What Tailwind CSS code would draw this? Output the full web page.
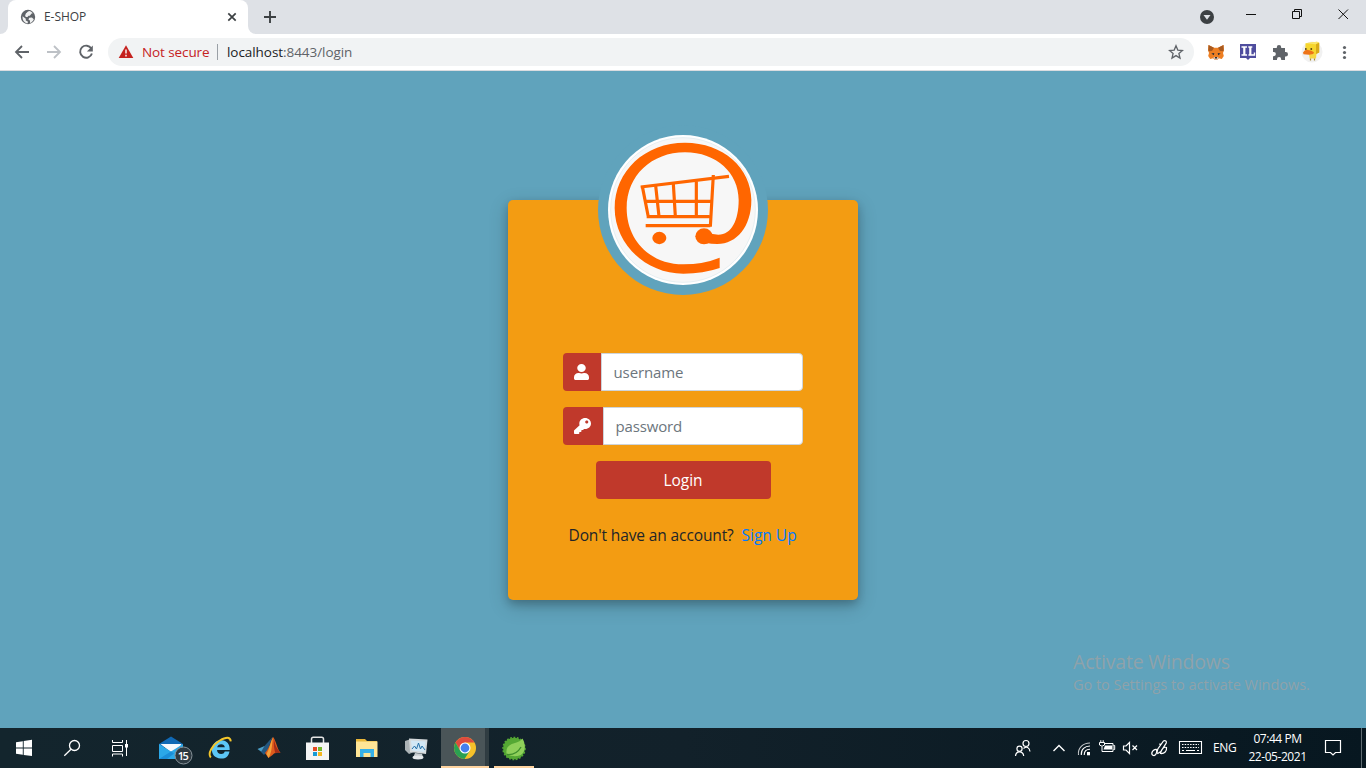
<!DOCTYPE html>
<html lang="en">
<head>
<meta charset="utf-8">
<title>E-SHOP</title>
<script src="https://cdn.jsdelivr.net/npm/@tailwindcss/browser@4"></script>
</head>
<body class="w-[1366px] h-[768px] overflow-hidden flex flex-col bg-[#60a3bc] font-['Open_Sans','Noto_Sans',sans-serif]">

<!-- Tab strip -->
<header class="h-[34px] flex shrink-0 bg-[#dee1e6]">
  <div class="w-2 h-full bg-white shrink-0"><div class="h-full bg-[#dee1e6] rounded-br-lg"></div></div>
  <div class="w-[240px] h-full bg-white rounded-t-lg flex items-center shrink-0">
    <svg class="ml-3 w-4 h-4" viewBox="20 9 16 16"><circle cx="28" cy="17" r="7.2" fill="#5f6368"/><path d="M22.600 16.200l3.200 2.600v1.800l2 1v1.700c-3.200-.2-5.700-3.200-5.200-7.100zM26 13.200c1.300-.3 1.500-2 3.200-2.200 1.400.3 2.700 1 3.600 2.200l-1.200.4-1.800 2.200h-1.300l-1 1.300h-1.700l-.7-1.600zM29.300 17.800l2.600-.3 1.900 1.700c-.6 1.900-2 3.200-3.700 3.700l-.2-2.400-1.500-1z" fill="#fff" opacity=".9"/></svg>
    <span class="ml-2 text-[12px] tracking-[-0.05px] text-[#3c4043] leading-4">E-SHOP</span>
    <svg class="ml-auto mr-[11px] w-[10px] h-[10px]" viewBox="0 0 10 10"><path d="M1.300 1.300l7.400 7.400M8.700 1.300L1.300 8.700" stroke="#3c4043" stroke-width="1.700"/></svg>
  </div>
  <div class="w-2 h-full bg-white shrink-0"><div class="h-full bg-[#dee1e6] rounded-bl-lg"></div></div>
  <svg class="w-[28px] h-[34px]" viewBox="256 0 28 34"><path d="M270 11v12M264 17h12" stroke="#3c4043" stroke-width="1.900"/></svg>
  <svg class="ml-auto w-[176px] h-[34px]" viewBox="1190 0 176 34"><circle cx="1207" cy="17" r="7" fill="#3c4043"/><path d="M1203.500 15h7l-3.500 4.800z" fill="#dee1e6"/><path d="M1246 14.500h10M1292.500 11.500h7v7h-7zM1294.500 11.500v-2h7v7h-2M1338.500 9.500l9.500 9.500M1348 9.500l-9.500 9.500" stroke="#111" fill="none"/></svg>
</header>

<!-- Toolbar -->
<nav class="h-[37px] shrink-0 flex items-center bg-white border-b border-[#dadce0]">
  <svg class="w-[108px] h-[36px] shrink-0" viewBox="0 34 108 36" fill="none" stroke-width="1.800"><path d="M29 52H16M22 46l-6 6 6 6" stroke="#5f6368"/><path d="M47 52h13M54 46l6 6-6 6" stroke="#bdc1c6"/><path d="M91.300 48.600a6 6 0 1 0 .6 4.800" stroke="#5f6368" stroke-width="1.900"/><path d="M92.800 45.600v5.900h-5.900z" fill="#5f6368"/></svg>
  <div class="w-[1086px] h-7 rounded-full bg-[#f1f3f4] flex items-center shrink-0">
    <svg class="ml-[10px] w-4 h-4 shrink-0" viewBox="118 44 16 16"><path d="M126 45.300L133.300 58H118.700z" fill="#c5221f"/><path d="M126 49.500v4M126 54.800v1.600" stroke="#fff" stroke-width="1.400"/></svg>
    <span class="ml-2 w-[75px] whitespace-nowrap text-[13.5px] tracking-[-0.1px] leading-4 text-[#c5221f]">Not secure</span>
    <span class="w-px h-4 bg-[#9aa0a6]"></span>
    <span class="ml-[9px] whitespace-nowrap text-[13.5px] tracking-[-0.06px] leading-4 text-[#5f6368]"><span class="text-[#202124]">localhost</span>:8443/login</span>
    <svg class="ml-auto mr-[10px] w-4 h-4" viewBox="1168 44 16 16"><path d="M1176 45.800l1.800 4.300 4.700.4-3.600 3 1.100 4.600-4-2.500-4 2.500 1.100-4.600-3.600-3 4.700-.4z" fill="none" stroke="#5f6368" stroke-width="1.300"/></svg>
  </div>
  <svg class="w-[172px] h-[36px] shrink-0" viewBox="1194 34 172 36">
    <path d="M1208.500 45l5.500 2.700h4l5.500-2.700.5 5-1 3 .8 3-2 3-3-.8-1.300 1.500h-3l-1.300-1.500-3 .8-2-3 .8-3-1-3z" fill="#ee7f22"/><path d="M1208.500 45l5.500 2.700-2 3.300-3.600.200zM1223.500 45l-5.500 2.700 2 3.300 3.600.200z" fill="#a85a20"/><path d="M1211.300 53.600l3-.600-.5 2.200zM1220.700 53.600l-3-.600.5 2.200z" fill="#2a2f3a"/><path d="M1213.500 57h5l-.6 2.500h-3.800z" fill="#d7c1b3"/><path d="M1215 57h2v1.600h-2z" fill="#33302d"/>
    <path d="M1240 44h16v14h-6l-2 2-2-2h-6z" fill="#4f4d9e"/><path d="M1241.500 47h5.500M1241.500 55h5.500M1248.300 47h4M1248.500 55h6v-2.600" stroke="#fff" stroke-width="1.400" fill="none"/><path d="M1244.300 47v8M1250.300 47v8" stroke="#fff" stroke-width="2.200"/>
    <path d="M1273 48h3.800v-.8a2.200 2.200 0 0 1 4.400 0v.8h3.800v4h.8a2.200 2.200 0 0 1 0 4.400h-.8v3.600h-3.800v-.8a2.100 2.100 0 0 0-4.200 0v.8H1273v-3.800h.8a2.100 2.100 0 0 0 0-4.200h-.8z" fill="#5f6368"/>
    <circle cx="1312" cy="52" r="10.500" fill="#f1f1f1"/><path d="M1305.500 43.200l11.500-1.500 2.200 1v9.800l-3 1.500h-10l-1-1z" fill="#f6d62e"/><path d="M1305.500 43.200l11.500-1.500 2 .8-3.200 1.800z" fill="#fae66e"/><path d="M1316 44.200l3.200-1.500v9.800l-3.200 1.500z" fill="#d9ab18"/><path d="M1309 54h7.500l-.5 4.500h-6.300z" fill="#f7d740"/><path d="M1303 52.500q1.500-3 5-2.600 3.500.2 6 2.300l-.8 1.800-4.200.700-5.500-.5z" fill="#ee7318"/><path d="M1305 49h1.600M1310.500 49h1.600" stroke="#3a2b10" stroke-width="1.600"/><path d="M1310.500 58.500v2M1314.500 58.500v2" stroke="#a98b35" stroke-width="1.200"/>
    <g fill="#5f6368"><circle cx="1344.500" cy="47.500" r="1.600"/><circle cx="1344.500" cy="52.500" r="1.600"/><circle cx="1344.500" cy="57.500" r="1.600"/></g>
  </svg>
</nav>

<!-- Login page -->
<main class="relative flex-1 bg-[#60a3bc] flex justify-center items-start pt-[129px]">
  <section class="relative w-[350px] h-[400px] rounded-[5px] bg-[#f39c12] shadow-[0_4px_8px_0_rgba(0,0,0,0.2),0_6px_20px_0_rgba(0,0,0,0.19)] flex flex-col items-center pt-[153px]">
    <svg class="absolute left-[90px] -top-[75px] w-[170px] h-[170px]" viewBox="24 0 510 510">
      <circle cx="279" cy="255" r="255" fill="#60a3bc"/><circle cx="279" cy="255" r="225" fill="#fff"/><circle cx="279" cy="255" r="217" fill="#f7f7f7" stroke="#dde9ed" stroke-width="2"/>
      <path fill="#ff6600" d="M389 429Q340 446 280 446C167 446 74 357 74 249C74 138 165 53 285 53C400 53 484 130 484 225C484 305 440 357 382 357Q362 357 350 354L352 322Q368 329 385 329C425 329 446 285 446 225C446 145 380 82 285 82C185 82 110 152 110 249C110 346 180 418 280 418Q340 418 389 398Z"/>
      <ellipse cx="342" cy="334" rx="26" ry="24" fill="#ff6600"/><ellipse cx="208" cy="339" rx="21" ry="18.500" fill="#ff6600"/>
      <g stroke="#ff6600" fill="none" stroke-width="9.500"><path d="M152 186L417 154"/><path d="M157 184l18 92M163 229h203M170 275h188M167 302h194M370 150l-9 155M197 182l10 92M250 176l6 98M319 169v105"/></g>
    </svg>
    <div class="w-[240px] h-[38px] flex">
      <div class="w-[38px] h-full rounded-l bg-[#c0392b] flex items-center pl-[11px]">
        <svg class="w-[15px] h-4" viewBox="0 0 448 512" preserveAspectRatio="none"><path fill="#fff" d="M224 256c70.700 0 128-57.300 128-128S294.700 0 224 0 96 57.300 96 128s57.300 128 128 128zm89.600 32h-16.700c-22.200 10.200-46.900 16-72.900 16s-50.600-5.800-72.900-16h-16.700C60.200 288 0 348.200 0 422.400V464c0 26.500 21.500 48 48 48h352c26.500 0 48-21.500 48-48v-41.600c0-74.200-60.200-134.400-134.400-134.400z"/></svg>
      </div>
      <div class="flex-1 rounded-r bg-white border border-[#ced4da] pl-[11.5px] text-[15px] leading-[37px] tracking-[-0.1px] text-[#6c757d]">username</div>
    </div>
    <div class="mt-4 w-[240px] h-[38px] flex">
      <div class="w-10 h-full rounded-l bg-[#c0392b] flex items-center pl-[11px]">
        <svg class="w-[17px] h-4" viewBox="0 0 512 512" preserveAspectRatio="none"><path fill="#fff" d="M512 176c0 97.200-78.800 176-176 176-11.200 0-22.200-1.100-32.800-3.100l-24 27c-4.600 5.100-11.100 8.100-18 8.100H224v40c0 13.300-10.700 24-24 24h-40v40c0 13.300-10.700 24-24 24H24c-13.300 0-24-10.700-24-24v-78c0-6.400 2.500-12.500 7-17l161.800-161.800C163 213.800 160 195.200 160 176 160 78.800 238.800 0 336 0c97.500 0 176 78.500 176 176zM336 128c0 26.500 21.500 48 48 48s48-21.500 48-48-21.500-48-48-48-48 21.500-48 48z"/></svg>
      </div>
      <div class="flex-1 rounded-r bg-white border border-[#ced4da] pl-[11.5px] text-[15px] leading-[37px] tracking-[-0.15px] text-[#6c757d]">password</div>
    </div>
    <div class="mt-4 ml-px w-[175px] h-[38px] rounded bg-[#c0392b] text-center text-white text-[15.5px] leading-[38px]"><span class="-ml-px">Login</span></div>
    <div class="mt-6 flex whitespace-nowrap text-[15.5px] leading-6 text-[#212529]"><span class="w-[173px] tracking-[-0.12px]">Don't have an account?</span><span class="w-[56px] text-[#007bff]">Sign Up</span></div>
  </section>
  <div class="absolute left-[1073px] top-[579px] whitespace-nowrap text-[#8fa2aa]">
    <div class="text-[19.5px] leading-6 tracking-[-0.2px]">Activate Windows</div>
    <div class="text-[14.5px] leading-[21px] tracking-[-0.02px]">Go to Settings to activate Windows.</div>
  </div>
</main>

<!-- Taskbar -->
<footer class="h-10 shrink-0 flex bg-linear-to-r from-[#13252d] via-[#12212a] to-[#071720] text-white">
  <svg class="w-12 h-10" viewBox="0 728 48 40"><path fill="#fff" d="M16 742.200l6.800-1v6.300H16zM23.700 741l8.300-1.200v7.700h-8.300zM16 748.400h6.800v6.300l-6.800-1zM23.700 748.400h8.300v7.700l-8.300-1.200z"/></svg>
  <svg class="w-12 h-10" viewBox="48 728 48 40"><g fill="none" stroke="#fff" stroke-width="1.300"><circle cx="74.500" cy="745.500" r="5"/><path d="M71 749.300l-6.700 6.500"/></g></svg>
  <svg class="w-[51px] h-10" viewBox="96 728 51 40"><path d="M112.500 740v2.500h10V740M112.500 745.500h10v6h-10zM112.500 756.500V754h10v2.500M126.500 740v16" fill="none" stroke="#fff"/><path d="M125 744h3v3.500h-3z" fill="#fff"/></svg>
  <svg class="w-[49px] h-10" viewBox="147 728 49 40"><path d="M159 744l12-7.500 12 7.500v3h-24z" fill="#1069b5"/><path d="M160.500 744h21l-3 6-8 2z" fill="#f5f9fd"/><path d="M159 744l12 7.500 12-7.500v15h-24z" fill="#2ba8e8"/><path d="M159 759l12-7.500 3 2-7 5.500z" fill="#1b8ed8"/><circle cx="183.500" cy="755.500" r="8.500" fill="#2d3a42" stroke="#88939a"/><text x="183.300" y="759.500" fill="#fff" font-size="11" font-weight="600" text-anchor="middle" textLength="11">15</text></svg>
  <svg class="w-[49px] h-10" viewBox="196 728 49 40"><path d="M229.500 751.500c-1 6-5 7.500-9 7-5.500-.5-9-4-8.500-9.500.4-5.500 4.500-9 9.500-8.700 5.500.3 8.500 4 8.200 9.700H217c.2 2.600 1.800 4 4.200 4 1.800 0 3-.8 3.600-2.500zM217.200 747.200h7.600c-.2-2-1.500-3-3.600-3-2.200 0-3.700 1.200-4 3z" fill="#5cc6f5" fill-rule="evenodd"/><path d="M210.800 757.500c-3.500-4 1.500-12.500 9-17 6-3.500 10.500-4 11 .8" fill="none" stroke="#f3c62b" stroke-width="1.900"/></svg>
  <svg class="w-[49px] h-10" viewBox="245 728 49 40"><path d="M257.500 749l7-3 2.500 2-5.500 4z" fill="#4b9fc8"/><path d="M264.500 746l8-9-5 14-3.500 4-3-3z" fill="#24577f"/><path d="M273 737c2.500 2 4 11.500 7.500 16-3-1-5.500-.5-8 2l-4 3-3.500-5c4-4 5.500-11 8-16z" fill="#de5b1d"/><path d="M273 737c-1 6-1 13-3 18l-1.500 3-2-4c3-5 4-12 6.500-17z" fill="#f4a23a"/><path d="M274 739c1 7 3.500 10 6.500 14-2-1-3.500-.5-5 .5-1.500-4-2-9-1.500-14.500z" fill="#a52d17"/></svg>
  <svg class="w-[49px] h-10" viewBox="294 728 49 40"><path d="M311.500 744v-5q0-1.800 1.800-1.800h8.400q1.800 0 1.800 1.800v5" fill="none" stroke="#e5e5e5" stroke-width="1.500"/><path d="M306 742.500h23V760h-23z" fill="#f4f4f4"/><path d="M313 747h4v4h-4z" fill="#e74b24"/><path d="M318 747h4v4h-4z" fill="#75b72c"/><path d="M313 752h4v4h-4z" fill="#159ad6"/><path d="M318 752h4v4h-4z" fill="#f4b51e"/></svg>
  <svg class="w-[49px] h-10" viewBox="343 728 49 40"><path d="M356 739h9l2 2h10v16h-21z" fill="#e9b739"/><path d="M356 741.500h21.500V757H356z" fill="#ffe596"/><path d="M360 757v-8h14v8h-3.500v-4h-7v4z" fill="#35b0e8"/></svg>
  <svg class="w-[49px] h-10" viewBox="392 728 49 40"><path d="M405 741l6-2 3 13-5 2-4-4z" fill="#abb3b6"/><path d="M409 738.500l18.500 1-1.500 14.500-16-2z" fill="#d5dadc"/><path d="M411 740.500l14.500 1-1.200 10.500-12.300-1.500z" fill="#d2e8f5"/><path d="M412 749l2.500-3 2 3 2-6 2 6 1.500-3 3 4" fill="none" stroke="#2571a8"/><path d="M415 753l7 .8 1 3.200-2 1.500-8-.5z" fill="#c5cbce"/><ellipse cx="418" cy="757.500" rx="5.500" ry="1.900" fill="#e4e8ea"/></svg>
  <svg class="w-12 h-10" viewBox="441 728 48 40"><path d="M441 728h44.500v40H441z" fill="#4a5558"/><path d="M485.500 728h3.500v40h-3.500z" fill="#303d42"/><path d="M441 766h48v2h-48z" fill="#fed39f"/><circle cx="465" cy="748" r="11" fill="#f6c12a"/><path d="M455.500 742.500A11 11 0 0 1 474.500 742.500H465L460.200 750.700z" fill="#dd4b3e"/><path d="M455.500 742.500A11 11 0 0 0 464.500 759L469.800 750.700 460.200 750.700z" fill="#2aa052"/><circle cx="465" cy="748" r="5.500" fill="#fff"/><circle cx="465" cy="748" r="4.400" fill="#4480ee"/></svg>
  <svg class="w-[49px] h-10" viewBox="489 728 49 40"><path d="M494 766h40v2h-40z" fill="#fed39f"/><circle cx="514" cy="748.500" r="10.800" fill="#55a834"/><circle cx="514" cy="748.500" r="11" fill="none" stroke="#55a834" stroke-width="1.600" stroke-dasharray="1.800 1.600"/><path d="M506.500 753.500c-1-8 5-9.500 10-11 2.500-.8 4.500-2 6-4 4 7 3 16.500-5 17.500-4.500.600-8.500-.500-11-2.500z" fill="#8fd05a"/><path d="M507 754.500c6 .5 11-2 14-7.500" stroke="#3f8f2c" stroke-width="1.300" fill="none"/></svg>
  <svg class="ml-auto w-[205px] h-10 shrink-0" viewBox="1005 728 205 40" fill="none" stroke="#fff" stroke-width="1.200">
    <circle cx="1026" cy="743.500" r="3"/><path d="M1023.500 748.500c3-2.500 6-1 6.500 3"/><circle cx="1019.500" cy="748.800" r="2.600"/><path d="M1015.500 756c.5-5.500 7.500-5.500 8.200 0"/>
    <path d="M1053.500 751l5.500-5.500 5.500 5.500" stroke-width="1.400"/>
    <g stroke-width="1.100"><path d="M1078.500 755c-1-7 4.500-12 11.500-12" stroke="#c5c9cb"/><path d="M1081.300 755c-.5-5.500 3.500-9 8.700-9"/><path d="M1084.200 755c0-3.500 2.300-5.800 5.800-5.800"/></g><path d="M1087 752h3v3.300h-3z" fill="#fff" stroke="none"/>
    <path d="M1104 743.500h9v8h-9.500M1113.500 745.500h1.200v4h-1.200" stroke-width="1"/><path d="M1105 745.500h7v4h-8.500z" fill="#fff" stroke="none"/><path d="M1099.500 742.500h5v2.500q-2.500 2.500-5 0zM1100.800 742v-1.800M1103.200 742v-1.800M1102 746.500v5h2" stroke-width="1"/>
    <path d="M1123.500 746h2.500l3.500-3.500v11l-3.500-3.500h-2.500zM1132.500 745.500l4.500 4.500M1137 745.500l-4.500 4.500"/>
    <path d="M1157 749.500c-3.500-1-6.500 3.500-4.500 5.500 2.500 1.800 5-1.500 4-5M1157 752.500l.8-3.500 5.700-8c1.800-1 3.500.3 2.700 2.200l-5.400 8.300-3 2zM1160.500 753.500c1-5 3.500-7 6-6 .5 3.500-2 6.500-6 6zM1160.500 746l-.8-2.500"/>
    <path d="M1179.500 741.500h22v12h-22z" stroke-width="1.100"/><path d="M1182 744.500h17M1182 747.500h17" stroke-dasharray="1.500 1.200"/><path d="M1182 750.500h2M1186 750.500h9M1197 750.500h2"/>
  </svg>
  <span class="w-[34px] ml-[3px] text-[12px] leading-10 tracking-[-0.400px] whitespace-nowrap">ENG</span>
  <div class="w-[61px] pt-[2px] text-center text-[12px] leading-[18px] tracking-[-0.450px] whitespace-nowrap"><div>07:44 PM</div><div>22-05-2021</div></div>
  <svg class="w-[58px] h-10 shrink-0" viewBox="1308 728 58 40"><path d="M1325.500 740.500h15v12h-5l-2.500 2.500-2.500-2.500h-5z" fill="none" stroke="#fff" stroke-width="1.200"/><path d="M1361.500 728v40" stroke="#5e6b71"/></svg>
</footer>
</body>
</html>
